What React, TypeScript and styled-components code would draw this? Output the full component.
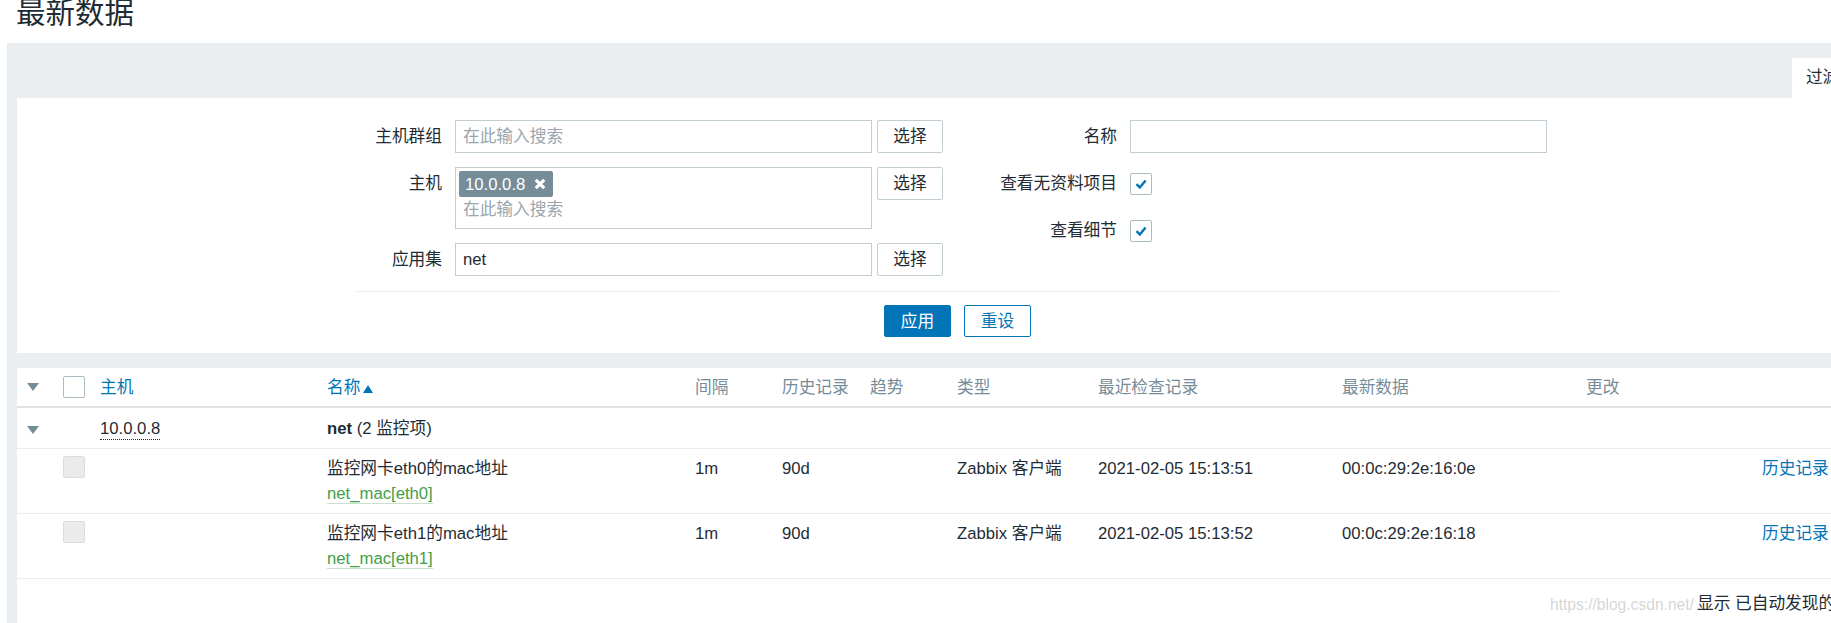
import styled, { createGlobalStyle } from 'styled-components';

const GlobalStyle = createGlobalStyle`
  html, body {
    margin: 0;
    padding: 0;
    background: #ffffff;
    overflow: hidden;
  }
  body {
    font-family: "Liberation Sans", "Noto Sans CJK SC", sans-serif;
    font-size: 16.7px;
    line-height: 25px;
    color: #1f2c33;
  }
  * {
    box-sizing: border-box;
  }
`;

const COLUMNS = '36px 37px 227px 368px 87px 88px 87px 141px 244px 244px 176px 1fr';

const Page = styled.div`
  width: 1831px;
  height: 623px;
  overflow: hidden;
`;

const Header = styled.div`
  display: flow-root;
  height: 43px;
  padding-left: 16px;
`;

const Title = styled.h1`
  margin: -4px 0 0;
  font-family: "Noto Sans CJK SC", sans-serif;
  font-size: 29.5px;
  font-weight: 400;
  line-height: 29px;
  color: #1f2c33;
`;

const Container = styled.div`
  margin-left: 7px;
  width: 1904px;
  height: 580px;
  background: #ebeef0;
  padding: 15px 0 0 10px;
`;

const TabBar = styled.div`
  display: flex;
  justify-content: flex-end;
  height: 40px;
  padding-right: 41px;
`;

const Tab = styled.div`
  background: #ffffff;
  padding: 0 14px;
  line-height: 40px;
  color: #1f2c33;
`;

const FilterPanel = styled.div`
  background: #ffffff;
  height: 255px;
  padding: 22px 0 0 339px;
`;

const FilterForm = styled.div`
  display: flex;
  width: 1203px;
`;

const FormColumn = styled.div<{ $width?: number }>`
  display: flex;
  flex-direction: column;
  gap: 14px;
  ${(p) => (p.$width ? `width: ${p.$width}px;` : 'flex: 1;')}
`;

const FormRow = styled.div<{ $label: number }>`
  display: grid;
  grid-template-columns: ${(p) => p.$label}px auto;
  column-gap: 13px;
  align-items: start;
`;

const Label = styled.div`
  text-align: right;
  line-height: 33px;
  white-space: nowrap;
`;

const FieldGroup = styled.div`
  display: flex;
  gap: 5px;
  align-items: flex-start;
`;

const TextBox = styled.div<{ $empty?: boolean }>`
  width: 417px;
  height: 33px;
  border: 1px solid #c2cdd3;
  padding: 0 7px;
  line-height: 31px;
  color: ${(p) => (p.$empty ? '#9aa6ad' : '#1f2c33')};
`;

const MultiSelect = styled.div`
  width: 417px;
  height: 62px;
  border: 1px solid #c2cdd3;
  padding: 3px;
  display: flex;
  flex-direction: column;
  align-items: flex-start;
`;

const Tag = styled.span`
  display: inline-flex;
  align-items: center;
  gap: 9px;
  height: 26px;
  padding: 0 7px 0 6px;
  background: #768d99;
  color: #ffffff;
  border-radius: 2px;
`;

const Placeholder = styled.div`
  padding-left: 4px;
  line-height: 26px;
  color: #9aa6ad;
`;

const SelectButton = styled.button`
  width: 66px;
  height: 33px;
  border: 1px solid #c2cdd3;
  border-radius: 2px;
  background: #ffffff;
  font: inherit;
  color: #1f2c33;
  padding: 0;
`;

const CheckCell = styled.div`
  height: 33px;
  display: flex;
  align-items: center;
`;

const CheckBox = styled.span<{ $disabled?: boolean }>`
  display: inline-flex;
  align-items: center;
  justify-content: center;
  width: 22px;
  height: 22px;
  border: 1px solid ${(p) => (p.$disabled ? '#dcdcdc' : '#acbbc2')};
  border-radius: 2px;
  background: ${(p) => (p.$disabled ? '#ebebeb' : '#ffffff')};
`;

const Separator = styled.div`
  width: 1203px;
  height: 1px;
  background: #ebeef0;
  margin-top: 15px;
`;

const ButtonRow = styled.div`
  width: 1203px;
  display: flex;
  justify-content: center;
  gap: 13px;
  margin-top: 13px;
`;

const ActionButton = styled.button<{ $primary?: boolean }>`
  width: 67px;
  height: 32px;
  border: 1px solid #0275b8;
  border-radius: 2px;
  background: ${(p) => (p.$primary ? '#0275b8' : '#ffffff')};
  color: ${(p) => (p.$primary ? '#ffffff' : '#0275b8')};
  font: inherit;
  padding: 0;
`;

const TablePanel = styled.div`
  position: relative;
  margin-top: 15px;
  background: #ffffff;
  height: 255px;
`;

const HeaderRow = styled.div`
  display: grid;
  grid-template-columns: ${COLUMNS};
  align-items: center;
  height: 40px;
  padding-left: 10px;
  border-bottom: 2px solid #dde3e7;
`;

const HeaderCell = styled.div<{ $link?: boolean }>`
  display: flex;
  align-items: center;
  color: ${(p) => (p.$link ? '#0275b8' : '#768d99')};
  white-space: nowrap;
`;

const GroupRow = styled.div`
  display: grid;
  grid-template-columns: ${COLUMNS};
  align-items: center;
  height: 41px;
  padding-left: 10px;
  border-bottom: 1px solid #ebeef0;
`;

const ItemRow = styled.div`
  display: grid;
  grid-template-columns: ${COLUMNS};
  align-items: start;
  height: 65px;
  padding: 7px 0 0 10px;
  border-bottom: 1px solid #ebeef0;
`;

const Cell = styled.div`
  white-space: nowrap;
`;

const HostLink = styled.span`
  border-bottom: 1px dotted #1f2c33;
  padding-bottom: 1px;
`;

const Bold = styled.b`
  font-weight: 700;
`;

const ItemKey = styled.span`
  color: #429e47;
  border-bottom: 1px solid #c9dfca;
`;

const Link = styled.span`
  color: #0275b8;
`;

const Footer = styled.div`
  position: relative;
  z-index: 1;
  display: flex;
  justify-content: flex-end;
  padding-right: 10px;
  margin-top: 12px;
  color: #1f2c33;
  white-space: nowrap;
`;

const Watermark = styled.div`
  position: absolute;
  left: 1533px;
  top: 224px;
  font-size: 15.6px;
  color: rgba(160, 160, 160, 0.45);
  white-space: nowrap;
  pointer-events: none;
`;

const CollapseArrow = () => (
  <svg width="12" height="8" viewBox="0 0 12 8">
    <polygon points="0,0 12,0 6,8" fill="#768d99" />
  </svg>
);

const SortArrow = () => (
  <svg width="10" height="8" viewBox="0 0 10 8" style={{ marginLeft: 3, marginTop: 4 }}>
    <polygon points="0,8 10,8 5,0" fill="#0275b8" />
  </svg>
);

const CheckMark = () => (
  <svg width="14" height="14" viewBox="0 0 14 14">
    <path d="M2.5 7.2 L5.8 10.4 L11.6 3.4" fill="none" stroke="#0275b8" strokeWidth="2.4" />
  </svg>
);

const RemoveIcon = () => (
  <svg width="12" height="12" viewBox="0 0 12 12">
    <path d="M1.8 1.8 L10.2 10.2 M10.2 1.8 L1.8 10.2" stroke="#ffffff" strokeWidth="3.2" />
  </svg>
);

const items = [
  { name: '监控网卡eth0的mac地址', key: 'net_mac[eth0]', time: '2021-02-05 15:13:51', value: '00:0c:29:2e:16:0e' },
  { name: '监控网卡eth1的mac地址', key: 'net_mac[eth1]', time: '2021-02-05 15:13:52', value: '00:0c:29:2e:16:18' },
];

export default function App() {
  return (
    <Page>
      <GlobalStyle />
      <Header>
        <Title>最新数据</Title>
      </Header>
      <Container>
        <TabBar>
          <Tab>过滤器</Tab>
        </TabBar>
        <FilterPanel>
          <FilterForm>
            <FormColumn $width={601}>
              <FormRow $label={86}>
                <Label>主机群组</Label>
                <FieldGroup>
                  <TextBox $empty>在此输入搜索</TextBox>
                  <SelectButton>选择</SelectButton>
                </FieldGroup>
              </FormRow>
              <FormRow $label={86}>
                <Label>主机</Label>
                <FieldGroup>
                  <MultiSelect>
                    <Tag>
                      10.0.0.8
                      <RemoveIcon />
                    </Tag>
                    <Placeholder>在此输入搜索</Placeholder>
                  </MultiSelect>
                  <SelectButton>选择</SelectButton>
                </FieldGroup>
              </FormRow>
              <FormRow $label={86}>
                <Label>应用集</Label>
                <FieldGroup>
                  <TextBox>net</TextBox>
                  <SelectButton>选择</SelectButton>
                </FieldGroup>
              </FormRow>
            </FormColumn>
            <FormColumn>
              <FormRow $label={160}>
                <Label>名称</Label>
                <TextBox />
              </FormRow>
              <FormRow $label={160}>
                <Label>查看无资料项目</Label>
                <CheckCell>
                  <CheckBox>
                    <CheckMark />
                  </CheckBox>
                </CheckCell>
              </FormRow>
              <FormRow $label={160}>
                <Label>查看细节</Label>
                <CheckCell>
                  <CheckBox>
                    <CheckMark />
                  </CheckBox>
                </CheckCell>
              </FormRow>
            </FormColumn>
          </FilterForm>
          <Separator />
          <ButtonRow>
            <ActionButton $primary>应用</ActionButton>
            <ActionButton>重设</ActionButton>
          </ButtonRow>
        </FilterPanel>

        <TablePanel>
          <HeaderRow>
            <HeaderCell>
              <CollapseArrow />
            </HeaderCell>
            <HeaderCell>
              <CheckBox />
            </HeaderCell>
            <HeaderCell $link>主机</HeaderCell>
            <HeaderCell $link>
              名称
              <SortArrow />
            </HeaderCell>
            <HeaderCell>间隔</HeaderCell>
            <HeaderCell>历史记录</HeaderCell>
            <HeaderCell>趋势</HeaderCell>
            <HeaderCell>类型</HeaderCell>
            <HeaderCell>最近检查记录</HeaderCell>
            <HeaderCell>最新数据</HeaderCell>
            <HeaderCell>更改</HeaderCell>
            <HeaderCell />
          </HeaderRow>

          <GroupRow>
            <Cell>
              <CollapseArrow />
            </Cell>
            <Cell />
            <Cell>
              <HostLink>10.0.0.8</HostLink>
            </Cell>
            <Cell>
              <Bold>net</Bold> (2 监控项)
            </Cell>
          </GroupRow>

          {items.map((item) => (
            <ItemRow key={item.key}>
              <Cell />
              <Cell>
                <CheckBox $disabled />
              </Cell>
              <Cell />
              <Cell>
                <div>{item.name}</div>
                <div>
                  <ItemKey>{item.key}</ItemKey>
                </div>
              </Cell>
              <Cell>1m</Cell>
              <Cell>90d</Cell>
              <Cell />
              <Cell>Zabbix 客户端</Cell>
              <Cell>{item.time}</Cell>
              <Cell>{item.value}</Cell>
              <Cell />
              <Cell>
                <Link>历史记录</Link>
              </Cell>
            </ItemRow>
          ))}

          <Footer>显示 已自动发现的 2 中的 2</Footer>
          <Watermark>https://blog.csdn.net/</Watermark>
        </TablePanel>
      </Container>
    </Page>
  );
}
